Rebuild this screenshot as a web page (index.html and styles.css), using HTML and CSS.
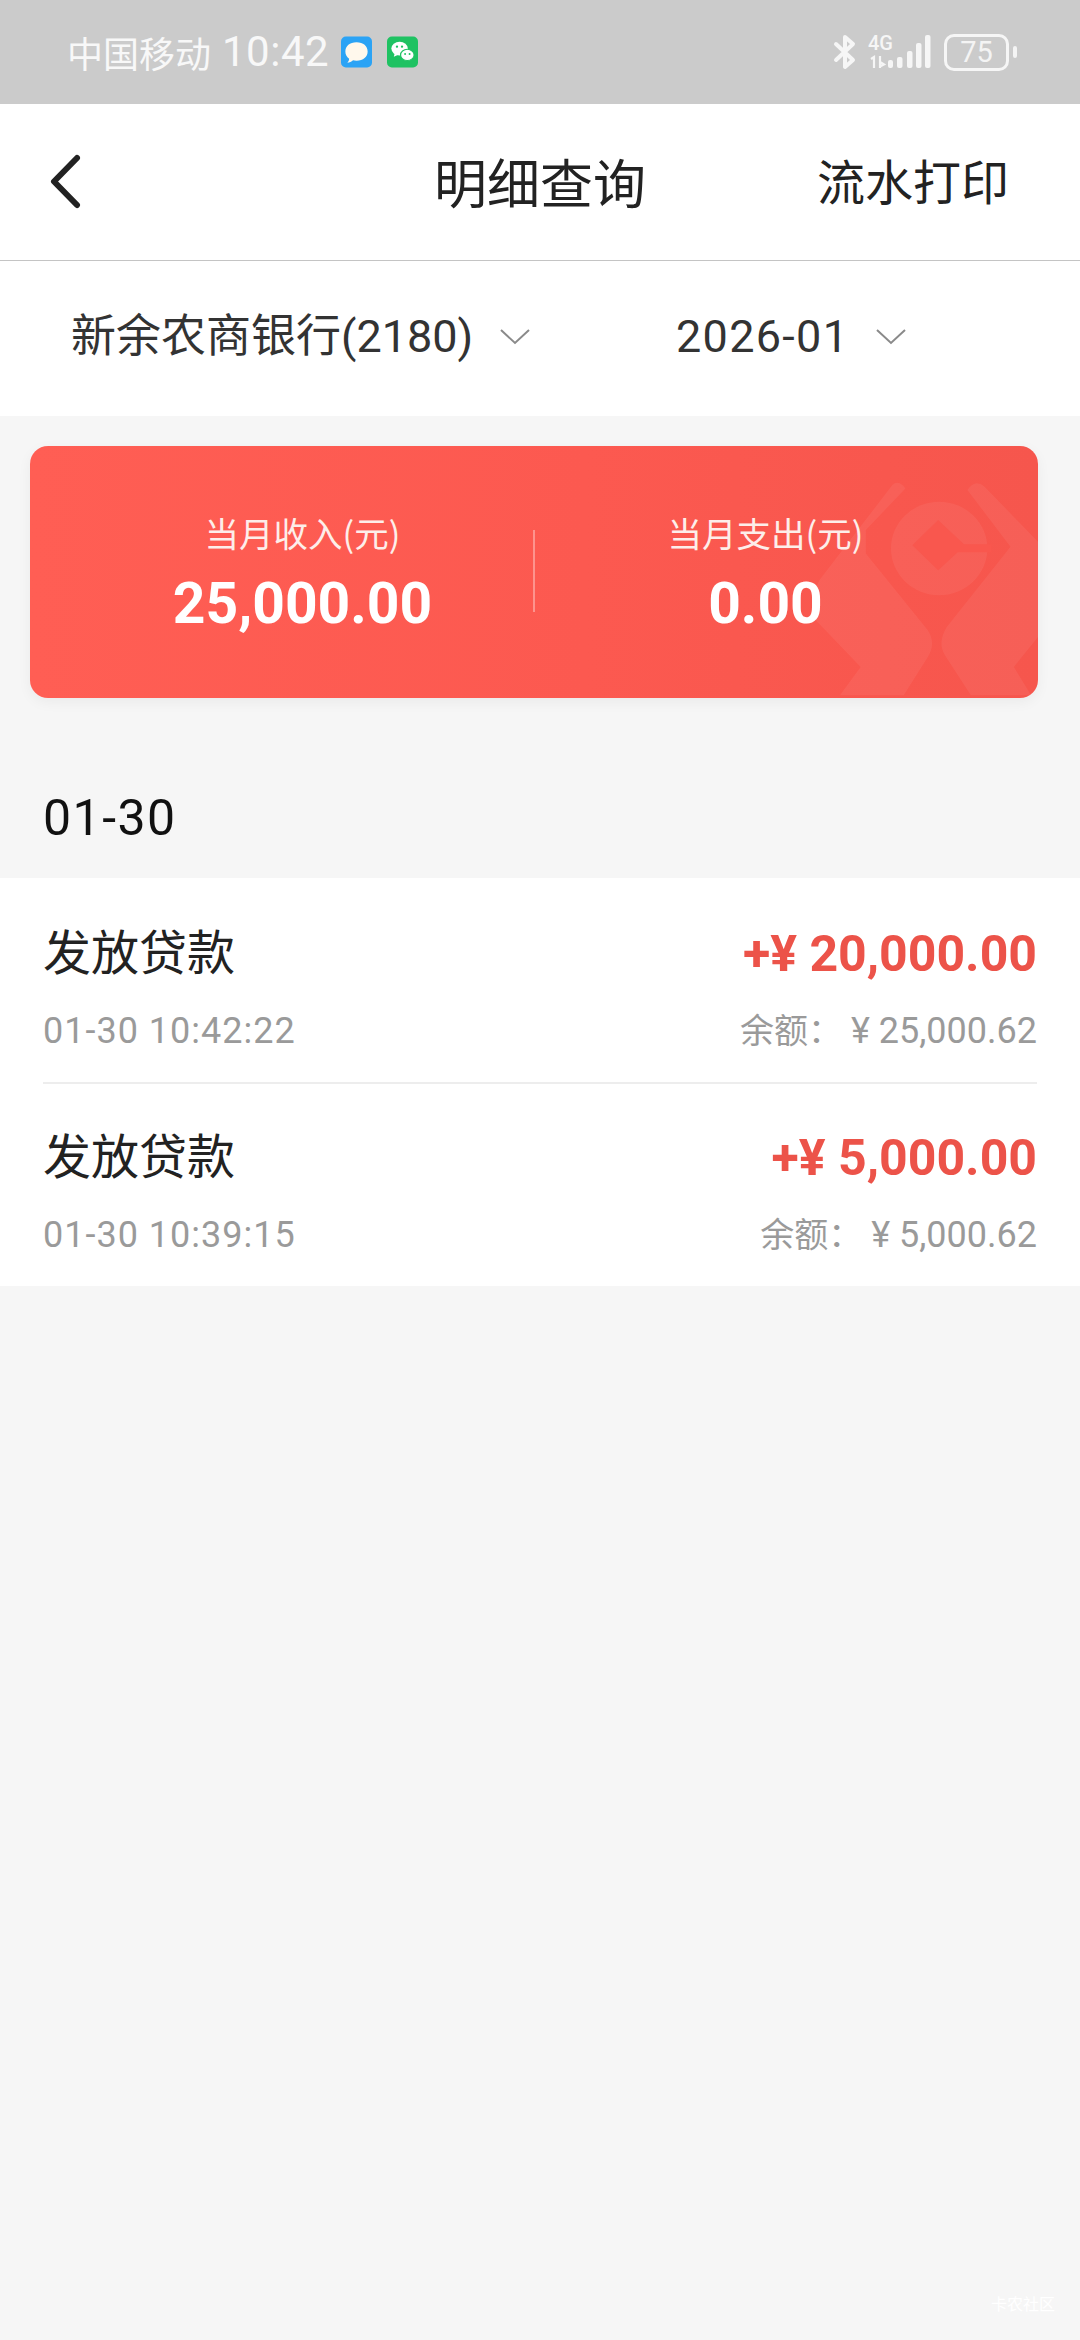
FILE: index.html
```html
<!DOCTYPE html>
<html lang="zh-CN">
<head>
<meta charset="utf-8">
<title>明细查询</title>
<link rel="stylesheet" href="styles.css">
</head>
<body>
<div class="page">
  <header class="status">
    <div class="status-left">
      <span class="carrier">中国移动</span>
      <span class="clock">10:42</span>
      <svg class="app-icon msg" viewBox="0 0 32 32"><rect width="32" height="32" rx="5" fill="#2ba3f5"/><path d="M16 6c7 0 11.500 4 11.500 9.500S23 25 16 25c-1.300 0-2.500-.1-3.600-.4C11 26.200 8.500 27 6.600 27c1-1 1.800-2.400 1.800-4C5.800 21.200 4.500 18.600 4.500 15.500 4.500 10 9 6 16 6z" fill="#fff8ec"/></svg>
      <svg class="app-icon wx" viewBox="0 0 32 32"><rect width="32" height="32" rx="5" fill="#1fc262"/><ellipse cx="13" cy="12.500" rx="8.500" ry="7" fill="#fff"/><path d="M8 17l-1 4 4-2z" fill="#fff"/><ellipse cx="21" cy="19" rx="7" ry="5.800" fill="#fff" stroke="#1fc262" stroke-width="1.200"/><circle cx="10.300" cy="10.500" r="1.200" fill="#1fc262"/><circle cx="15.500" cy="10.500" r="1.200" fill="#1fc262"/><circle cx="18.700" cy="18" r="1" fill="#1fc262"/><circle cx="23.300" cy="18" r="1" fill="#1fc262"/></svg>
    </div>
    <div class="status-right">
      <svg class="bt" viewBox="0 0 24 36"><path d="M3 10l17 16-8 7V3l8 7L3 26" fill="none" stroke="#f6f6f6" stroke-width="4" stroke-linejoin="round" stroke-linecap="round"/></svg>
      <svg class="signal" viewBox="0 0 62 36">
        <rect x="19" y="26" width="5" height="8" rx="2" fill="#f6f6f6"/>
        <rect x="28" y="23" width="5.500" height="11" rx="2" fill="#f6f6f6"/>
        <rect x="38" y="17" width="5.500" height="17" rx="2" fill="#f6f6f6"/>
        <rect x="47" y="9" width="5.500" height="25" rx="2" fill="#f6f6f6"/>
        <rect x="56" y="1" width="5.500" height="33" rx="2" fill="#f6f6f6"/>
        <path d="M2 25l3-2v11M11 34V22M11 28l4 2.500-4 2" fill="none" stroke="#f6f6f6" stroke-width="2.200"/>
      </svg>
      <span class="net">4G</span>
      <div class="battery"><span class="battery-num">75</span></div>
      <span class="battery-tip"></span>
    </div>
  </header>

  <nav class="nav">
    <svg class="back" viewBox="0 0 32 56"><path d="M28 4L5 27.500 28 51" fill="none" stroke="#222" stroke-width="6" stroke-linecap="round" stroke-linejoin="round"/></svg>
    <h1 class="nav-title">明细查询</h1>
    <span class="nav-action">流水打印</span>
  </nav>

  <section class="filters">
    <div class="filter filter-bank">
      <span>新余农商银行(2180)</span>
      <svg class="chev" viewBox="0 0 30 16"><path d="M1 1l14 13L29 1" fill="none" stroke="#8a8a8a" stroke-width="2"/></svg>
    </div>
    <div class="filter filter-date">
      <span>2026-01</span>
      <svg class="chev" viewBox="0 0 30 16"><path d="M1 1l14 13L29 1" fill="none" stroke="#8a8a8a" stroke-width="2"/></svg>
    </div>
  </section>

  <section class="summary">
    <svg class="watermark" viewBox="780 78 665 755" preserveAspectRatio="none">
      <g fill="#fff" fill-opacity=".06">
        <circle cx="1158" cy="385" r="140"/>
        <path d="M1022 195Q1040 178 1060 205L945 330V400L1125 630Q1150 670 1125 710L1055 825H870L930 740L800 600Q780 540 810 480Z"/>
        <path d="M1240 210Q1262 175 1290 200L1445 365V650L1375 740L1425 825H1250L1178 710Q1150 670 1180 620L1365 380Z"/>
      </g>
      <path class="wm-cut" d="M1155 300L1230 372H1310V396H1212L1155 450L1080 375Z"/>
    </svg>
    <div class="stat">
      <span class="stat-label">当月收入(元)</span>
      <span class="stat-value">25,000.00</span>
    </div>
    <span class="stat-rule"></span>
    <div class="stat">
      <span class="stat-label">当月支出(元)</span>
      <span class="stat-value">0.00</span>
    </div>
  </section>

  <div class="day">01-30</div>

  <section class="list">
    <article class="row">
      <div class="row-line">
        <span class="row-title">发放贷款</span>
        <span class="row-amount">+¥ 20,000.00</span>
      </div>
      <div class="row-line row-sub">
        <span class="row-time">01-30 10:42:22</span>
        <span><span class="row-balance-label">余额：</span> ¥ 25,000.62</span>
      </div>
    </article>
    <article class="row">
      <div class="row-line">
        <span class="row-title">发放贷款</span>
        <span class="row-amount">+¥ 5,000.00</span>
      </div>
      <div class="row-line row-sub">
        <span class="row-time">01-30 10:39:15</span>
        <span><span class="row-balance-label">余额：</span> ¥ 5,000.62</span>
      </div>
    </article>
  </section>

  <footer class="stamp">卡农社区</footer>
</div>
</body>
</html>
```
FILE: styles.css
```css
* { box-sizing: border-box; }
html, body { margin: 0; padding: 0; }
body {
  width: 1080px;
  height: 2340px;
  overflow: hidden;
  background: #f6f6f6;
  font-family: "Noto Sans CJK SC", Roboto, sans-serif;
  color: #222;
}
.page { width: 1080px; height: 2340px; position: relative; display: flex; flex-direction: column; }

.status {
  height: 104px;
  background: #cbcbcb;
  display: flex;
  align-items: center;
  justify-content: space-between;
  padding: 0 63px 0 67px;
  color: #fff;
}
.status-left { display: flex; align-items: center; }
.carrier { font-size: 36px; line-height: 50px; color: #f8f8f8; }
.clock { font-family: Roboto, sans-serif; font-size: 42px; line-height: 50px; margin-left: 11px; color: #f8f8f8; letter-spacing: .5px; }
.app-icon { width: 31px; height: 32px; display: block; }
.msg { margin-left: 12px; }
.wx { margin-left: 15px; }
.status-right { display: flex; align-items: center; position: relative; }
.bt { width: 24px; height: 36px; display: block; }
.signal { width: 62px; height: 36px; margin-left: 12px; display: block; }
.net { position: absolute; left: 35px; top: -2px; font-family: Roboto, sans-serif; font-size: 20px; line-height: 22px; font-weight: 500; color: #f6f6f6; }
.battery {
  width: 65px; height: 37px; margin-left: 13px;
  border: 3px solid #f6f6f6; border-radius: 10px;
  display: flex; align-items: center; justify-content: center;
}
.battery-num { font-family: Roboto, sans-serif; font-size: 29px; line-height: 30px; color: #f4f4f4; }
.battery-tip { width: 4px; height: 12px; border-radius: 2px; background: #f4f4f4; margin-left: 4px; }

.nav {
  height: 157px;
  background: #fff;
  border-bottom: 1px solid #c4c4c4;
  display: flex;
  align-items: center;
  position: relative;
  padding: 0 71px 6px 49px;
  justify-content: space-between;
}
.back { width: 32px; height: 56px; display: block; margin-top: 5px; }
.nav-title {
  position: absolute; left: 0; right: 0; top: 47px; text-align: center;
  margin: 0; font-size: 53px; font-weight: 400; line-height: 60px; color: #222;
}
.nav-action { font-size: 48px; line-height: 54px; color: #222; }

.filters {
  height: 155px;
  background: #fff;
  display: flex;
  align-items: center;
  padding-bottom: 3px;
  font-family: Roboto, "Noto Sans CJK SC", sans-serif;
  font-size: 45px;
  color: #333;
}
.filter { display: flex; align-items: center; }
.filter-bank { margin-left: 71px; }
.filter-date { position: absolute; left: 676px; }
.filter span { line-height: 56px; }
.filter-date span { letter-spacing: 1.3px; }
.chev { width: 30px; height: 16px; display: block; margin-left: 27px; }

.summary {
  margin: 30px 42px 0 30px;
  height: 252px;
  padding: 3px 42px 0;
  border-radius: 18px;
  background: linear-gradient(90deg, #ff5e54 0%, #fc5950 55%, #f6564d 100%);
  box-shadow: 0 4px 14px rgba(0,0,0,.05);
  display: flex;
  align-items: center;
  position: relative;
  overflow: hidden;
  color: #fff;
}
.watermark { position: absolute; right: 0; top: 0; width: 229px; height: 252px; }
.wm-cut { fill: #f9574e; }
.stat { flex: 1; display: flex; flex-direction: column; align-items: center; position: relative; }
.stat-label { font-size: 34.500px; line-height: 44px; color: #fdeeea; }
.stat-value { font-family: Roboto, sans-serif; font-size: 57px; font-weight: 700; line-height: 66px; margin-top: 17px; }
.stat-rule { width: 2px; height: 82px; background: rgba(255,255,255,.35); flex: none; margin-top: -6px; }

.day { font-family: Roboto, sans-serif; font-size: 50px; line-height: 60px; letter-spacing: 1.500px; color: #111; margin-top: 90px; padding: 0 0 30px 43px; }

.list { background: #fff; padding: 0 43px 0 43px; height: 408px; }
.row { height: 204px; padding-top: 41px; }
.row + .row { border-top: 2px solid #ededed; padding-top: 39px; }
.row-line { display: flex; justify-content: space-between; align-items: flex-start; }
.row-title { font-size: 48px; line-height: 60px; color: #222; }
.row-amount { font-family: Roboto, "Noto Sans CJK SC", sans-serif; font-size: 50px; line-height: 60px; font-weight: 700; color: #ec5349; margin-top: 5px; }
.row-sub { margin-top: 25px; font-family: Roboto, "Noto Sans CJK SC", sans-serif; font-size: 36px; line-height: 44px; color: #9a9a9a; }
.row-time { letter-spacing: 1px; }
.row-balance-label { font-size: 34px; }

.stamp { position: absolute; right: 25px; bottom: 27px; font-size: 16px; line-height: 20px; color: #fff; }
```
